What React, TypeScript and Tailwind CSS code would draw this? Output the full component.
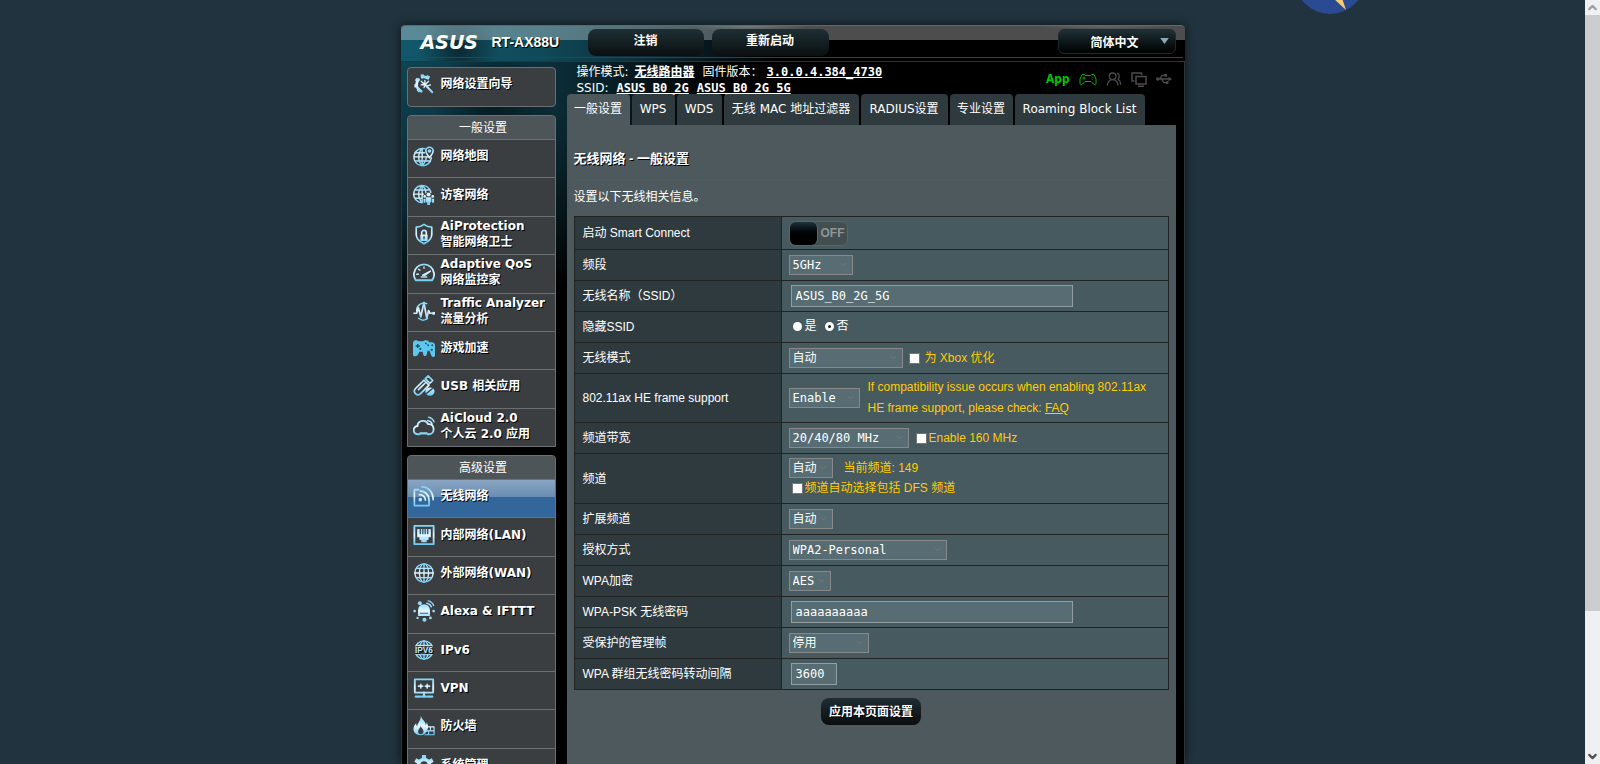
import React, { useState } from 'react';
import clsx from 'clsx';
import { ChevronDown, ChevronUp, UsersRound } from 'lucide-react';

const SANS = "font-['DejaVu_Sans','Noto_Sans_CJK_SC',sans-serif]";
const ARIAL = "font-['Liberation_Sans','Noto_Sans_CJK_SC',sans-serif]";
const MONO = "font-['DejaVu_Sans_Mono','Noto_Sans_CJK_SC',monospace]";

const Globe = () => (
  <>
    <circle cx="12" cy="12" r="10" />
    <ellipse cx="12" cy="12" rx="5" ry="10" />
    <path d="M12 2v20M2 12h20M4 7h16M4 17h16" />
  </>
);

const ICONS: Record<string, React.ReactNode> = {
  wizard: (
    <>
      <path
        strokeWidth="3"
        d="M9 20a8 8 0 0 1-4.500-4.500M4 12a8 8 0 0 1 2-5M10 4.500a8 8 0 0 1 6 1"
      />
      <path strokeWidth="3.500" strokeLinecap="butt" d="M10 1.500l.5 4M3 6.500l3.500 2.500M1.500 14h4M17 3l-1.500 3.500M5 20l3-2.500" />
      <path strokeWidth="2.200" d="M12 11.500l9 9.500" />
      <path d="M9 9l3 3M13 8v3M9 13l3-.5M17 9l-3 3M19 13l-3 1M12 16l1-3" />
    </>
  ),
  map: (
    <>
      <path d="M13 4a9.500 9.500 0 1 0 7 10M10 3.500C5 9 5 17 10 22.500C13 19 14.500 16 14.500 13M10 3.500v19M1 13h17M2.500 8.500h10M2.500 17.500h16" />
      <path strokeWidth="1.800" d="M18 14c-2-3-4-5-4-7.500a4 4 0 0 1 8 0C22 9 20 11 18 14z" />
      <circle cx="18" cy="6.500" r="1.200" />
    </>
  ),
  guest: (
    <>
      <path d="M19.500 9A9.500 9.500 0 1 0 10 20.500M10 1.500C5 7 5 15 10 20.500M10 1.500c2.500 2 4 5 4 8M10 1.500v19M.5 11h11M2.500 6.500h15M2.500 15.500h7" />
      <g fill="url(#ice)" stroke="none">
        <circle cx="17" cy="11.500" r="2.200" />
        <circle cx="12.800" cy="13.500" r="1.500" />
        <circle cx="21.500" cy="13.500" r="1.500" />
        <path d="M14 14.500h6v5l-1.500 1v2.500h-3v-2.500l-1.500-1zM11.500 16h2v4.500h-2zM20.800 16h2.200v4.500h-2.200z" />
      </g>
    </>
  ),
  protection: (
    <>
      <path strokeWidth="1.800" d="M12 1.500c2.500 2 5 3 8.500 3v8c0 5-4 8-8.500 10c-4.500-2-8.500-5-8.500-10v-8c3.500 0 6-1 8.500-3z" />
      <path strokeWidth="1.800" d="M9.500 13v-2.500a2.500 2.500 0 0 1 5 0V13" />
      <rect x="8" y="12.500" width="8" height="7" rx="1" fill="url(#ice)" stroke="none" />
      <path stroke="#3a3e41" d="M12 15v2" />
    </>
  ),
  qos: (
    <>
      <path strokeWidth="2" d="M3 21a11 11 0 1 1 18 0z" />
      <path d="M4 14.500h2M6 9l1.500 1M12 6.500v1.500" />
      <path fill="url(#ice)" d="M19 11l-6.500 5l-2-.5z" />
      <path d="M9 17.500h6" />
    </>
  ),
  traffic: (
    <>
      <path d="M4 12A8 8 0 0 1 15 4M6 20a8 8 0 0 0 10 0" strokeWidth="1.500" />
      <path strokeWidth="1.800" d="M1 14.500h3l2-6l2.500 10l3.500-16l3 18l2-9l1.500 3h2.500" />
      <circle cx="22.500" cy="14.500" r="1" fill="url(#ice)" />
    </>
  ),
  game: (
    <>
      <path
        fill="#5cc8f0"
        stroke="none"
        d="M0 7c0-3 2-4 5-3c2 1 5 1 7 0c3-1 5 0 6 2c3-1 6 0 6 3v11c0 2-3 3-4.500-1L18 15h-2l-1 4c-1 3-4 2-4-1l-.5-2H7l-2 4c-2 2-5 1-5-1z"
      />
      <g fill="#24505f" stroke="none">
        <path d="M4.500 7.500h1.500v1.500h1.500v1.500H6V12H4.500v-1.500H3V9h1.500z" />
        <circle cx="14" cy="7" r="1" />
        <circle cx="16.500" cy="9" r="1" />
        <circle cx="8" cy="13" r="1.200" />
        <circle cx="21" cy="9" r="1" />
        <circle cx="20.500" cy="14" r="1.200" />
      </g>
    </>
  ),
  usb: (
    <>
      <path strokeWidth="1.800" d="M2.500 15L12 5.500l5.500 5.500L8 20.500a3.900 3.900 0 0 1-5.500-5.500z" />
      <path strokeWidth="1.800" d="M13.500 4l3-3l5 5l-3 3zM6 16l7-7" />
      <ellipse cx="18.500" cy="18" rx="5" ry="4.500" fill="url(#ice)" stroke="none" />
      <path stroke="#3a3e41" d="M15 20l6-5" />
    </>
  ),
  cloud: (
    <>
      <path strokeWidth="2" d="M7 21H5.500a4.500 4.500 0 0 1-.5-9c0-6 9-8 11.500-2c4-.5 6 2 6 5.500S20 21 17.500 21H16" />
      <path strokeWidth="2.500" strokeDasharray="3 1" d="M8 20h8" />
      <path d="M16 6a6 6 0 0 1 5 4M17 2.500a8 8 0 0 1 6 5" />
    </>
  ),
  wireless: (
    <>
      <path strokeWidth="1.800" d="M6 5H1.500v17.500h16v-5" />
      <circle cx="8" cy="16" r="2" fill="url(#ice)" stroke="none" />
      <path strokeWidth="2" d="M7 10.500a6 6 0 0 1 6.500 6M8 6.500c5 0 9.500 4 9.500 10M10 2c7 0 12 6 12 14" />
    </>
  ),
  lan: (
    <>
      <rect x="1.500" y="2" width="21" height="20" strokeWidth="2" />
      <path fill="url(#ice)" stroke="none" d="M4.500 5.500h15v9H17v3h-2V20H9v-2.500H7v-3H4.500z" />
      <path stroke="#3a5a66" d="M8 5.500v5M10.700 5.500v5M13.300 5.500v5M16 5.500v5" />
    </>
  ),
  wan: <Globe />,
  alexa: (
    <>
      <path fill="url(#ice)" stroke="none" d="M5.500 17.500V11a6.500 6.500 0 0 1 13 0v6.500z" />
      <path stroke="#3a5a66" strokeWidth="1" d="M8 14.500h8" />
      <g fill="#8fdcf8" stroke="none">
        <circle cx="7.500" cy="3.500" r="2.200" />
        <circle cx="1.800" cy="12" r="1.500" />
        <circle cx="22.500" cy="12" r="1.500" />
        <circle cx="5" cy="19.500" r="1.300" />
        <circle cx="12.500" cy="21.500" r="2.200" />
        <circle cx="19" cy="19.500" r="1.600" />
      </g>
      <path d="M15 3.500a6 6 0 0 1 5 4M16.500 1a8 8 0 0 1 6 5" />
    </>
  ),
  ipv6: (
    <>
      <Globe />
      <rect x="0" y="8" width="24" height="8.500" fill="#3a3e41" stroke="none" />
      <text
        x="12"
        y="15.500"
        textAnchor="middle"
        fontFamily="Liberation Sans, sans-serif"
        fontSize="9"
        fontWeight="bold"
        fill="#bfeaff"
        stroke="none"
      >
        IPV6
      </text>
    </>
  ),
  vpn: (
    <>
      <rect x="2" y="2.500" width="20" height="14.500" strokeWidth="2" />
      <path strokeWidth="1.800" d="M6 10h4.500M8.500 8v4M13.500 10H18M15.500 8v4" />
      <path strokeWidth="2.500" d="M12 17v3M3 21.500h5M10 21.500h4M16 21.500h5" />
    </>
  ),
  firewall: (
    <>
      <path
        fill="url(#ice)"
        stroke="none"
        d="M8.500 0c.5 5 5 6 5.500 11c.7-1 .8-2 .6-3.500c2 3 2.400 5 1.400 8c-1 3-3.500 6.500-7.500 6.500C4 22 .5 19.500.5 15.500c0-3 1.500-5 3-6.500c0 1.500.2 2.500 1 3.500C5 8 9 6 8.500 0z"
      />
      <path fill="#3a3e41" stroke="none" d="M8.500 12c.5 2.500 3 3.500 3 6c0 1.500-1 3-3 3s-3-1.500-3-3c0-2.500 2.500-3.500 3-6z" />
      <path d="M16 13h7v8.500H13M14 17.300h9M19 13v4.300M17 17.300v4.200" strokeWidth="1.200" />
    </>
  ),
  admin: (
    <>
      <circle cx="12" cy="12" r="6" strokeWidth="4" />
      <path strokeWidth="4.500" strokeLinecap="butt" d="M12 1v4M12 19v4M2.500 6.500L6 8.500M18 15.500l3.500 2M2.500 17.500L6 15.500M18 8.500l3.500-2" />
    </>
  ),
};

type MenuEntry = { icon: string; lines: string[] };

const GENERAL: MenuEntry[] = [
  { icon: 'map', lines: ['网络地图'] },
  { icon: 'guest', lines: ['访客网络'] },
  { icon: 'protection', lines: ['AiProtection', '智能网络卫士'] },
  { icon: 'qos', lines: ['Adaptive QoS', '网络监控家'] },
  { icon: 'traffic', lines: ['Traffic Analyzer', '流量分析'] },
  { icon: 'game', lines: ['游戏加速'] },
  { icon: 'usb', lines: ['USB 相关应用'] },
  { icon: 'cloud', lines: ['AiCloud 2.0', '个人云 2.0 应用'] },
];

const ADVANCED: MenuEntry[] = [
  { icon: 'wireless', lines: ['无线网络'] },
  { icon: 'lan', lines: ['内部网络(LAN)'] },
  { icon: 'wan', lines: ['外部网络(WAN)'] },
  { icon: 'alexa', lines: ['Alexa & IFTTT'] },
  { icon: 'ipv6', lines: ['IPv6'] },
  { icon: 'vpn', lines: ['VPN'] },
  { icon: 'firewall', lines: ['防火墙'] },
  { icon: 'admin', lines: ['系统管理'] },
];

const TABS = [
  { label: '一般设置', width: 'w-[63px]' },
  { label: 'WPS', width: 'w-[43px]' },
  { label: 'WDS', width: 'w-[45px]' },
  { label: '无线 MAC 地址过滤器', width: 'w-[135px]' },
  { label: 'RADIUS设置', width: 'w-[87px]' },
  { label: '专业设置', width: 'w-[63px]' },
  { label: 'Roaming Block List', width: 'w-[130px]' },
];

const MenuIcon = ({ name }: { name: string }) => (
  <svg
    viewBox="0 0 24 24"
    className="h-[22px] w-[22px] shrink-0"
    fill="none"
    stroke="url(#ice)"
    strokeWidth="1.5"
    strokeLinecap="round"
    strokeLinejoin="round"
    aria-hidden="true"
  >
    {ICONS[name]}
  </svg>
);

const MenuGroup = ({ title, items, active }: { title: string; items: MenuEntry[]; active?: string }) => (
  <section className="mt-2 rounded-t border border-[#6b7071] bg-[#3a3e41]">
    <h2 className="h-[23px] rounded-t bg-[#4d5558] pl-1 text-center text-xs leading-6">{title}</h2>
    <ul className="grid h-[307px] auto-rows-fr">
      {items.map((item) => (
        <li
          key={item.icon}
          className={clsx(
            'border-t border-[#6b7071]',
            item.icon === active && 'bg-[linear-gradient(#8aa5c2,#6b8db3_45%,#33669b_45%,#33669b)]'
          )}
        >
          <a
            href="#"
            className={clsx(
              'flex h-full items-center gap-[6px] pl-[5px] text-xs leading-4 font-bold [text-shadow:1px_1px_0_#000]',
              item.lines.length > 1 ? 'pb-[3px]' : 'pb-[5px]'
            )}
          >
            <MenuIcon name={item.icon} />
            <span className="flex flex-col whitespace-nowrap">
              {item.lines.map((line) => (
                <span key={line}>{line}</span>
              ))}
            </span>
          </a>
        </li>
      ))}
    </ul>
  </section>
);

const Select = ({ id, value, width }: { id: string; value: string; width: string }) => (
  <span className={clsx('relative inline-block h-5 shrink-0 align-middle', width)}>
    <select
      id={id}
      className={clsx(
        'block h-5 w-full appearance-none border border-[#888] bg-[#576d73] pl-[3px] text-xs leading-[18px] text-white',
        MONO
      )}
    >
      <option>{value}</option>
    </select>
    <ChevronDown size={11} className="pointer-events-none absolute top-1 right-1 text-[#777]" />
  </span>
);

const TextInput = ({ id, value, width }: { id: string; value: string; width: string }) => (
  <input
    id={id}
    type="text"
    defaultValue={value}
    className={clsx('ml-[2px] block h-[22px] border border-[#929ea1] bg-[#576d73] pl-1 text-xs', width, MONO)}
  />
);

const Check = ({ children, gap = 'gap-[2px]' }: { children: React.ReactNode; gap?: string }) => (
  <label className={clsx('flex items-center text-[#fc0]', gap)}>
    <input type="checkbox" className="h-[11px] w-[11px] appearance-none border border-[#767676] bg-white" />
    {children}
  </label>
);

const Radio = ({ label, checked }: { label: string; checked?: boolean }) => (
  <label className="flex items-center gap-[3px]">
    <input
      type="radio"
      name="hide-ssid"
      defaultChecked={checked}
      className="h-[9px] w-[9px] appearance-none rounded-full bg-white checked:border-[3px] checked:border-white checked:bg-[#222]"
    />
    {label}
  </label>
);

const Row = ({
  label,
  htmlFor,
  height = 'h-[31px]',
  children,
}: {
  label: string;
  htmlFor?: string;
  height?: string;
  children: React.ReactNode;
}) => (
  <tr className={height}>
    <th scope="row" className="w-[207px] border border-[#222] bg-[#2f3a3e] pl-2 text-left font-normal">
      {htmlFor ? <label htmlFor={htmlFor}>{label}</label> : label}
    </th>
    <td className="border border-[#222] bg-[#475a5f] pl-[7px]">{children}</td>
  </tr>
);

const Header = () => (
  <header className="h-9 shrink-0 rounded-t border-t border-[#5c6a70] bg-[linear-gradient(rgba(255,255,255,0.3)_14px,transparent_14px),radial-gradient(circle_at_58px_24px,rgba(8,24,30,0.7),transparent_40px),radial-gradient(ellipse_at_350px_0,rgba(120,140,145,0.45),transparent_60px),radial-gradient(ellipse_at_700px_0,rgba(90,90,90,0.4),transparent_70px),linear-gradient(90deg,#12586b,#0f4958_18%,#0c303b_30%,#000_48%)]">
    <div className="mx-[2px] flex h-8 items-start border-b border-[#3a4144] pl-[18px]">
      <span className={clsx('w-[71px] pt-1 text-[19px] leading-6 font-bold italic', SANS)}>ASUS</span>
      <span className={clsx('w-[96px] pt-1 text-sm leading-6 font-bold [text-shadow:1px_1px_0_#000]', ARIAL)}>
        RT-AX88U
      </span>
      <button
        type="button"
        className="mt-[3px] mr-2 h-[27px] w-[116px] rounded-lg bg-linear-to-b from-[#1e3036] to-[#0b0f10] pb-1 text-xs font-bold"
      >
        注销
      </button>
      <button
        type="button"
        className="mt-[3px] h-[27px] w-[117px] rounded-lg bg-linear-to-b from-[#1e3036] to-[#0b0f10] pb-1 text-xs font-bold"
      >
        重新启动
      </button>
      <span className="relative mt-[3px] mr-[7px] ml-auto h-[25px] w-[118px]">
        <select
          aria-label="语言"
          className="h-full w-full appearance-none rounded-md border border-[#1d2a2f] bg-linear-to-b from-[#1f3137] to-[#020303] pt-[2px] pl-8 text-xs font-bold"
        >
          <option>简体中文</option>
        </select>
        <svg viewBox="0 0 10 7" className="pointer-events-none absolute top-[9px] right-[7px] h-[6px] w-[9px]">
          <path d="M0 0h10L5 7z" fill="#8fa6b5" />
        </svg>
      </span>
    </div>
  </header>
);

const StatusBar = () => (
  <div className="flex justify-between pr-1 pl-[10px] text-xs leading-4">
    <div className="pt-[2px] whitespace-nowrap">
      <p className="flex">
        操作模式:
        <a href="#" className="mr-2 ml-[6px] font-bold underline">
          无线路由器
        </a>
        固件版本：
        <a href="#" className={clsx('ml-1 font-bold underline', MONO)}>
          3.0.0.4.384_4730
        </a>
      </p>
      <p className="flex">
        SSID:
        <a href="#" className={clsx('mr-2 ml-2 font-bold underline', MONO)}>
          ASUS_B0_2G
        </a>
        <a href="#" className={clsx('font-bold underline', MONO)}>
          ASUS_B0_2G_5G
        </a>
      </p>
    </div>
    <div className="flex items-center gap-[9px] text-[#4b4b4b]">
      <a href="#" className="font-['Noto_Sans',sans-serif] font-bold text-[#00c800]">
        App
      </a>
      <svg
        viewBox="0 0 18 13"
        className="h-[13px] w-[18px]"
        fill="none"
        stroke="#00b400"
        strokeLinejoin="round"
        aria-hidden="true"
      >
        <path d="M3 1.500h2.500l1 1h5l1-1H15L17 6v4.500c0 1.500-1.500 1.500-2.500.5L12 8.500H6L3.500 11C2.500 12 1 12 1 10.500V6z" />
        <path d="M3.500 5h3M5 3.500v3M12 5h.5M14 4v.5M13 6.500h.5" />
      </svg>
      <UsersRound size={16} strokeWidth={2} />
      <svg viewBox="0 0 16 15" className="h-[15px] w-4" fill="none" stroke="currentColor" strokeWidth="1.500">
        <path d="M3.500 9H1V1h9.500v2" />
        <path d="M5 4.500h10v7.500H5zM7 14.200h6" />
      </svg>
      <svg viewBox="0 0 18 12" className="h-3 w-4" fill="none" stroke="currentColor" strokeWidth="1.500">
        <path d="M1 6h14M4 6l3-4h3M6 6l3 4h3" />
        <path d="M14 3.500L18 6l-4 2.500z" fill="currentColor" stroke="none" />
        <circle cx="2" cy="6" r="2" fill="currentColor" stroke="none" />
        <path d="M9.500.5h3v3h-3zM11 8.500h3v3h-3z" fill="currentColor" stroke="none" />
      </svg>
    </div>
  </div>
);

const WirelessForm = () => {
  const [smart, setSmart] = useState(false);

  return (
    <table className={clsx('mt-[10px] w-full border-collapse text-xs', ARIAL)}>
      <tbody>
        <Row label="启动 Smart Connect" height="h-[33px]">
          <button
            type="button"
            role="switch"
            aria-checked={smart}
            aria-label="Smart Connect"
            onClick={() => setSmart(!smart)}
            className="flex h-[25px] w-[59px] items-center rounded-md border border-[#566669] bg-[#434e51]"
          >
            <span className="h-[23px] w-[28px] rounded-md border-r border-[#5c6a6d] bg-linear-to-b from-[#1f333b] to-black to-70%" />
            <span className="pl-[3px] font-bold text-[#8e9698]">OFF</span>
          </button>
        </Row>
        <Row label="频段" htmlFor="band">
          <Select id="band" value="5GHz" width="w-16" />
        </Row>
        <Row label="无线名称（SSID）" htmlFor="ssid">
          <TextInput id="ssid" value="ASUS_B0_2G_5G" width="w-[282px]" />
        </Row>
        <Row label="隐藏SSID">
          <div className="flex gap-2 pb-[2px] pl-1">
            <Radio label="是" />
            <Radio label="否" checked />
          </div>
        </Row>
        <Row label="无线模式" htmlFor="mode">
          <div className="flex items-center gap-[6px]">
            <Select id="mode" value="自动" width="w-[114px]" />
            <Check gap="gap-[5px]">为 Xbox 优化</Check>
          </div>
        </Row>
        <Row label="802.11ax HE frame support" htmlFor="he" height="h-[49px]">
          <div className="flex items-center gap-2">
            <Select id="he" value="Enable" width="w-[71px]" />
            <p className="max-w-[290px] leading-[21px] text-[#fc0]">
              If compatibility issue occurs when enabling 802.11ax HE frame support, please check:{' '}
              <a href="#" className="underline">
                FAQ
              </a>
            </p>
          </div>
        </Row>
        <Row label="频道带宽" htmlFor="width">
          <div className="flex items-center gap-[7px]">
            <Select id="width" value="20/40/80 MHz" width="w-[120px]" />
            <Check>Enable 160 MHz</Check>
          </div>
        </Row>
        <Row label="频道" htmlFor="channel" height="h-[50px]">
          <div className="flex items-center gap-[11px]">
            <Select id="channel" value="自动" width="w-11" />
            <span className="text-[#fc0]">当前频道: 149</span>
          </div>
          <div className="pt-[2px] pb-[3px] pl-[3px]">
            <Check>频道自动选择包括 DFS 频道</Check>
          </div>
        </Row>
        <Row label="扩展频道" htmlFor="ext">
          <Select id="ext" value="自动" width="w-11" />
        </Row>
        <Row label="授权方式" htmlFor="auth">
          <Select id="auth" value="WPA2-Personal" width="w-[158px]" />
        </Row>
        <Row label="WPA加密" htmlFor="crypto">
          <Select id="crypto" value="AES" width="w-[42px]" />
        </Row>
        <Row label="WPA-PSK 无线密码" htmlFor="psk">
          <TextInput id="psk" value="aaaaaaaaaa" width="w-[282px]" />
        </Row>
        <Row label="受保护的管理帧" htmlFor="mfp">
          <Select id="mfp" value="停用" width="w-20" />
        </Row>
        <Row label="WPA 群组无线密码转动间隔" htmlFor="rekey">
          <TextInput id="rekey" value="3600" width="w-[46px]" />
        </Row>
      </tbody>
    </table>
  );
};

const Scrollbar = () => (
  <div className="flex w-[15px] shrink-0 flex-col items-center bg-[#f0f0f0] text-[#a0a0a0]" aria-hidden="true">
    <ChevronUp size={13} strokeWidth={4} className="my-px shrink-0" />
    <div className="h-[78%] w-full bg-[#cdcdcd]" />
    <ChevronDown size={13} strokeWidth={4} className="mt-auto mb-px shrink-0 text-[#505050]" />
  </div>
);

export default function App() {
  return (
    <div className={clsx('flex h-screen overflow-hidden bg-[#21333e] text-white', SANS)}>
      <svg width="0" height="0" className="absolute" aria-hidden="true">
        <linearGradient id="ice" gradientUnits="userSpaceOnUse" x1="0" y1="2" x2="0" y2="22">
          <stop offset="0" stopColor="#7fd4f7" />
          <stop offset="0.5" stopColor="#e6f7ff" />
          <stop offset="1" stopColor="#6fcdf5" />
        </linearGradient>
      </svg>

      <div className="relative flex flex-1 justify-center overflow-hidden pt-[25px]">
        <svg viewBox="0 0 70 70" className="absolute -top-14 right-[220px] h-[70px] w-[70px]" aria-hidden="true">
          <circle cx="35" cy="35" r="35" fill="#2b4a94" />
          <path d="M38 54l9 0l4 12z" fill="#f5cb76" />
        </svg>

        <div className="flex w-full max-w-[784px] flex-col rounded-t bg-black shadow-[0_0_10px_#0c151a]">
          <Header />
          <div className="flex flex-1 items-start border-x border-t border-[#2a3439] bg-[radial-gradient(circle_at_90px_40px,rgba(0,0,0,0.5),transparent_60px),radial-gradient(ellipse_320px_260px_at_0_0,#0f4452,#0b2c36_50%,transparent)] pr-2">
            <nav className="ml-[5px] w-[149px] shrink-0 pt-[5px]">
              <a
                href="#"
                className="flex h-10 items-center gap-[6px] rounded border border-[#6b7071] bg-[#3a3e41] pb-[6px] pl-[5px] text-xs font-bold [text-shadow:1px_1px_0_#000]"
              >
                <MenuIcon name="wizard" />
                网络设置向导
              </a>
              <MenuGroup title="一般设置" items={GENERAL} />
              <MenuGroup title="高级设置" items={ADVANCED} active="wireless" />
            </nav>

            <main className="ml-[11px] min-w-0 flex-1">
              <StatusBar />
              <div role="tablist" className="-mt-[2px] flex h-[31px] gap-[2px] text-xs">
                {TABS.map((tab, i) => (
                  <button
                    key={tab.label}
                    type="button"
                    role="tab"
                    aria-selected={i === 0}
                    className={clsx(
                      'shrink-0 rounded-t pb-[2px] whitespace-nowrap',
                      tab.width,
                      i === 0 ? 'bg-[#4d595d]' : 'bg-[#2f3a3e]'
                    )}
                  >
                    {tab.label}
                  </button>
                ))}
              </div>
              <div className={clsx('h-[700px] bg-[#4d595d] px-[7px] pt-6', ARIAL)}>
                <h1 className="text-[13px] leading-5 font-bold [text-shadow:1px_1px_0_#000]">无线网络 - 一般设置</h1>
                <p className="mt-[10px] border-t border-[#515c60] pt-2 text-xs leading-[18px]">
                  设置以下无线相关信息。
                </p>
                <WirelessForm />
                <div className="pt-2 text-center">
                  <button
                    type="button"
                    className="h-[27px] rounded-lg bg-linear-to-b from-[#1e2e34] to-[#0a0d0e] px-2 text-xs font-bold [text-shadow:1px_1px_0_#000]"
                  >
                    应用本页面设置
                  </button>
                </div>
              </div>
            </main>
          </div>
        </div>
      </div>
      <Scrollbar />
    </div>
  );
}
